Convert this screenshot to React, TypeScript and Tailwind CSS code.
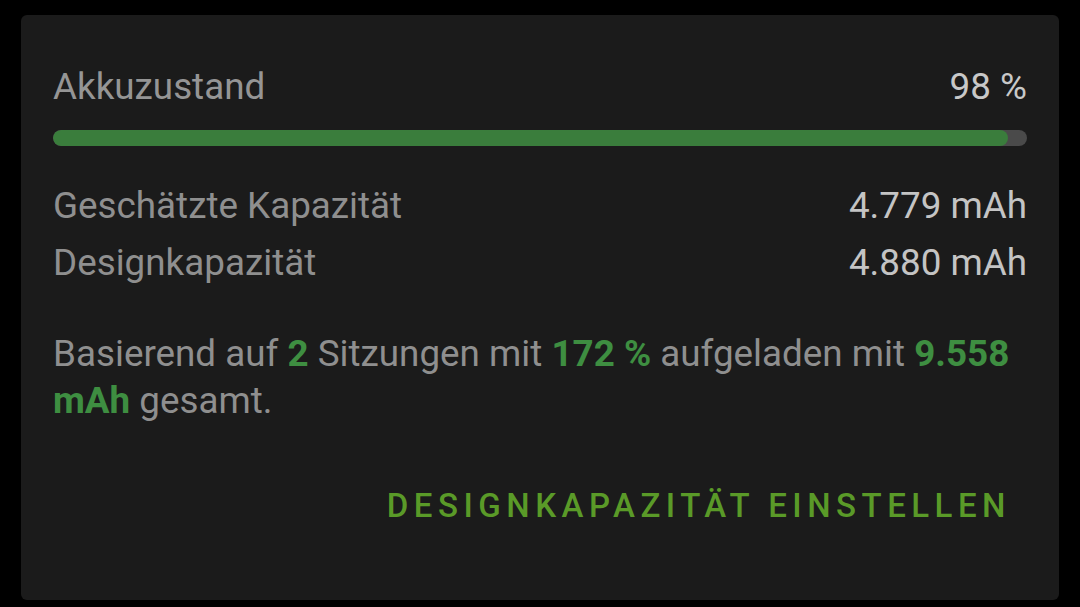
import React from "react";

const rows = [
  { label: "Geschätzte Kapazität", value: "4.779 mAh" },
  { label: "Designkapazität", value: "4.880 mAh" },
];

export default function App() {
  const health = 98;

  return (
    <div
      className="w-[1080px] h-[607px] bg-black pl-[21px] pr-[21px] pt-[15px] pb-[7px]"
      style={{ fontFamily: "Roboto, 'Noto Sans', sans-serif" }}
    >
      <div className="h-full rounded-[6px] bg-[#1b1b1b] px-[32px] pt-[51px]">
        <div className="flex items-center justify-between text-[36.8px] leading-[42px]">
          <span className="text-[#959595]">Akkuzustand</span>
          <span className="text-[#c8c8c8]">{health} %</span>
        </div>

        <div className="mt-[22px] h-[16px] rounded-full bg-[#4a4a4a] overflow-hidden">
          <div
            className="h-full rounded-full bg-[#3a7d3c]"
            style={{ width: `${health}%` }}
          />
        </div>

        <div className="mt-[31px]">
          {rows.map((row) => (
            <div
              key={row.label}
              className="flex items-center justify-between text-[36.8px] leading-[57px]"
            >
              <span className="text-[#8f8f8f]">{row.label}</span>
              <span className="text-[#c4c4c4]">{row.value}</span>
            </div>
          ))}
        </div>

        <p className="mt-[39px] text-[36.8px] leading-[47px] text-[#8f8f8f]">
          Basierend auf <span className="font-bold text-[#3e8e41]">2</span>{" "}
          Sitzungen mit <span className="font-bold text-[#3e8e41]">172 %</span>{" "}
          aufgeladen mit{" "}
          <span className="font-bold text-[#3e8e41]">9.558 mAh</span> gesamt.
        </p>

        <div className="mt-[62px] flex justify-end pr-[16px]">
          <button className="text-[33px] leading-[40px] font-medium tracking-[5.5px] text-[#5a9a28]">
            DESIGNKAPAZITÄT EINSTELLEN
          </button>
        </div>
      </div>
    </div>
  );
}
